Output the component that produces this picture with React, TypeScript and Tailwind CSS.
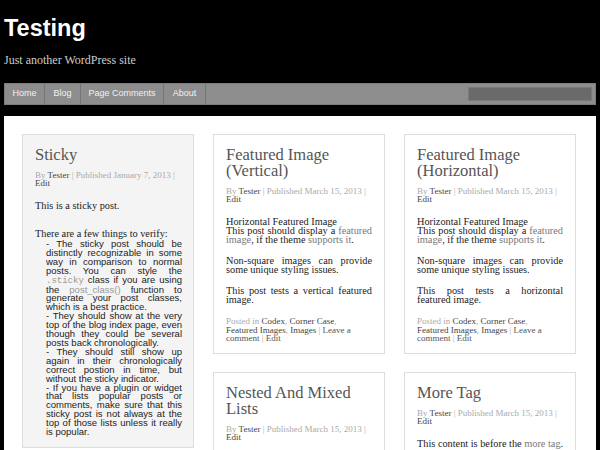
import React from "react";

const serif = "font-['Liberation_Serif',serif]";

function Meta({ date }: { date: string }) {
  return (
    <div className="mt-[8px] text-[9px] leading-[8px] text-[#aaa]">
      By <span className="text-[#444]">Tester</span> | Published {date} |{" "}
      <span className="text-[#444]">Edit</span>
    </div>
  );
}

function Card({
  title,
  date,
  sticky,
  children,
}: {
  title: React.ReactNode;
  date: string;
  sticky?: boolean;
  children?: React.ReactNode;
}) {
  return (
    <div
      className={
        "border border-[#ddd] px-[12px] pt-[12px] pb-[10px] " +
        (sticky ? "bg-[#f4f4f4]" : "bg-white")
      }
    >
      <h2 className="text-[16.5px] leading-[16px] text-[#555]">{title}</h2>
      <Meta date={date} />
      <div className="mt-[14px] text-[10.3px] leading-[9px] text-[#222] text-justify">
        {children}
      </div>
    </div>
  );
}

function Footer() {
  return (
    <div className="mt-[13px] text-left text-[9px] leading-[8.5px] text-[#aaa]">
      Posted in <span className="text-[#444]">Codex</span>,{" "}
      <span className="text-[#444]">Corner Case</span>,
      <br />
      <span className="text-[#444]">Featured Images</span>,{" "}
      <span className="text-[#444]">Images</span> |{" "}
      <span className="text-[#555]">Leave a</span>
      <br />
      <span className="text-[#555]">comment</span> | <span className="text-[#555]">Edit</span>
    </div>
  );
}

function FeaturedBody({ kind }: { kind: string }) {
  return (
    <>
      <p className="mb-[12px]">
        Horizontal Featured Image
        <br />
        This post should display a <span className="text-[#777]">featured image</span>, if the
        theme <span className="text-[#777]">supports it</span>.
      </p>
      <p className="mb-[12px]">Non-square images can provide some unique styling issues.</p>
      <p>This post tests a {kind} featured image.</p>
      <Footer />
    </>
  );
}

export default function App() {
  const nav = [
    { label: "Home", w: "w-[40px]" },
    { label: "Blog", w: "w-[36px]" },
    { label: "Page Comments", w: "w-[83px]" },
    { label: "About", w: "w-[42px]" },
  ];
  const code = "text-[#999]";
  return (
    <div className={"h-[450px] overflow-hidden bg-black " + serif}>
      <header className="px-[4px] pt-[14px]">
        <h1 className="font-['Liberation_Sans',sans-serif] text-[23.5px] leading-[28px] font-bold text-white">
          Testing
        </h1>
        <p className="mt-[11px] text-[12px] leading-[14px] text-[#ccc]">Just another WordPress site</p>
      </header>
      <nav className="mx-[4px] mt-[16px] flex h-[22px] items-stretch border border-[#7d7d7d] bg-[#8d8d8d] font-['Liberation_Sans',sans-serif] text-[9px] text-[#f2f2f2]">
        {nav.map((n) => (
          <div key={n.label} className={"flex items-center justify-center border-r border-[#767676] " + n.w}>
            {n.label}
          </div>
        ))}
        <div className="ml-auto mr-[3px] mt-[3px] h-[14px] w-[124px] border border-[#7a7a7a] bg-[#6a6a6a]" />
      </nav>
      <main className="mx-[4px] mt-[11px] h-[400px] bg-white px-[18px] pt-[18px]">
        <div className="flex gap-[19px]">
          <div className="w-[172px] flex flex-col gap-[18px]">
            <Card title="Sticky" date="January 7, 2013" sticky>
              <p className="mb-[19px]">This is a sticky post.</p>
              <p>There are a few things to verify:</p>
              <div className="mt-[2px] ml-[11px] mr-[-1px] font-['Liberation_Sans',sans-serif] text-[9.5px] leading-[8.9px] text-[#222]">
                - The sticky post should be distinctly recognizable in some way in comparison to normal
                posts. You can style the{" "}
                <span className={"font-['Liberation_Mono',monospace] text-[9px] " + code}>.sticky</span> class
                if you are using the <span className={code}>post_class()</span> function to generate your post
                classes, which is a best practice.
                <br />- They should show at the very top of the blog index page, even though they could be
                several posts back chronologically.
                <br />- They should still show up again in their chronologically correct postion in time,
                but without the sticky indicator.
                <br />- If you have a plugin or widget that lists popular posts or comments, make sure that
                this sticky post is not always at the top of those lists unless it really is popular.
              </div>
            </Card>
          </div>
          <div className="w-[172px] flex flex-col gap-[18px]">
            <Card
              title={
                <>
                  Featured Image
                  <br />
                  (Vertical)
                </>
              }
              date="March 15, 2013"
            >
              <FeaturedBody kind="vertical" />
            </Card>
            <Card
              title={
                <>
                  Nested And Mixed
                  <br />
                  Lists
                </>
              }
              date="March 15, 2013"
            >
              <p>Testing the nesting of lists.</p>
            </Card>
          </div>
          <div className="w-[172px] flex flex-col gap-[18px]">
            <Card
              title={
                <>
                  Featured Image
                  <br />
                  (Horizontal)
                </>
              }
              date="March 15, 2013"
            >
              <FeaturedBody kind="horizontal" />
            </Card>
            <Card title="More Tag" date="March 15, 2013">
              <p className="whitespace-nowrap">
                This content is before the <span className="text-[#777]">more tag</span>.
              </p>
            </Card>
          </div>
        </div>
      </main>
    </div>
  );
}
